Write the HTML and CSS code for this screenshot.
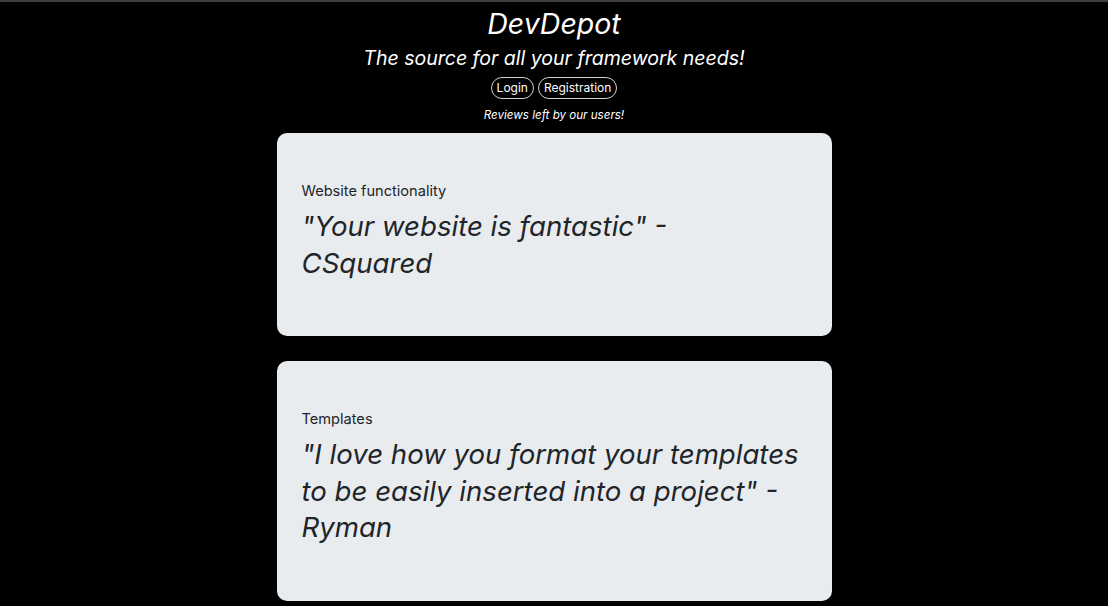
FILE: index.html
```html
<!DOCTYPE html>
<html>
<head>
<meta charset="utf-8">
<link rel="stylesheet" href="styles.css">
</head>
<body>
<div class="topbar"></div>
<header class="hero">
  <h1 class="title">DevDepot</h1>
  <p class="tagline">The source for all your framework needs!</p>
  <div class="actions">
    <a class="pill" href="#">Login</a>
    <a class="pill" href="#">Registration</a>
  </div>
  <p class="reviews-note">Reviews left by our users!</p>
</header>
<main class="reviews">
  <section class="card">
    <div class="card-label">Website functionality</div>
    <p class="card-quote">"Your website is fantastic" - CSquared</p>
  </section>
  <section class="card">
    <div class="card-label">Templates</div>
    <p class="card-quote">"I love how you format your templates to be easily inserted into a project" - Ryman</p>
  </section>
</main>
</body>
</html>
```
FILE: styles.css
```css
html, body {
  margin: 0;
  padding: 0;
  background: #000;
  color: #fff;
  font-family: Inter, "Liberation Sans", sans-serif;
}
.topbar {
  height: 2px;
  background: #3a3d41;
}
.hero {
  display: flex;
  flex-direction: column;
  align-items: center;
}
.title {
  margin: 5px 0 0;
  font-size: 28.5px;
  line-height: 34px;
  font-weight: 400;
  font-style: italic;
}
.tagline {
  margin: 4px 0 0;
  font-size: 19.5px;
  line-height: 26px;
  font-style: italic;
}
.actions {
  display: flex;
  gap: 4px;
  margin-top: 6px;
}
.pill {
  color: #fff;
  text-decoration: none;
  font-size: 12px;
  line-height: 20px;
  padding: 0 5px;
  border: 1px solid #cfcfcf;
  border-radius: 11px;
}
.reviews-note {
  margin: 8px 0 0;
  font-size: 11.6px;
  line-height: 17px;
  font-style: italic;
}
.reviews {
  display: flex;
  flex-direction: column;
  align-items: center;
  gap: 25px;
  margin-top: 9px;
}
.card {
  box-sizing: border-box;
  width: 555px;
  background: #e9ecef;
  color: #212529;
  border-radius: 10px;
  padding: 48px 30px 55px 25px;
}
.card-label {
  font-size: 14.6px;
  line-height: 21px;
}
.card-quote {
  margin: 6px 0 0;
  font-size: 27.6px;
  line-height: 36.5px;
  font-style: italic;
  font-weight: 400;
}
```
